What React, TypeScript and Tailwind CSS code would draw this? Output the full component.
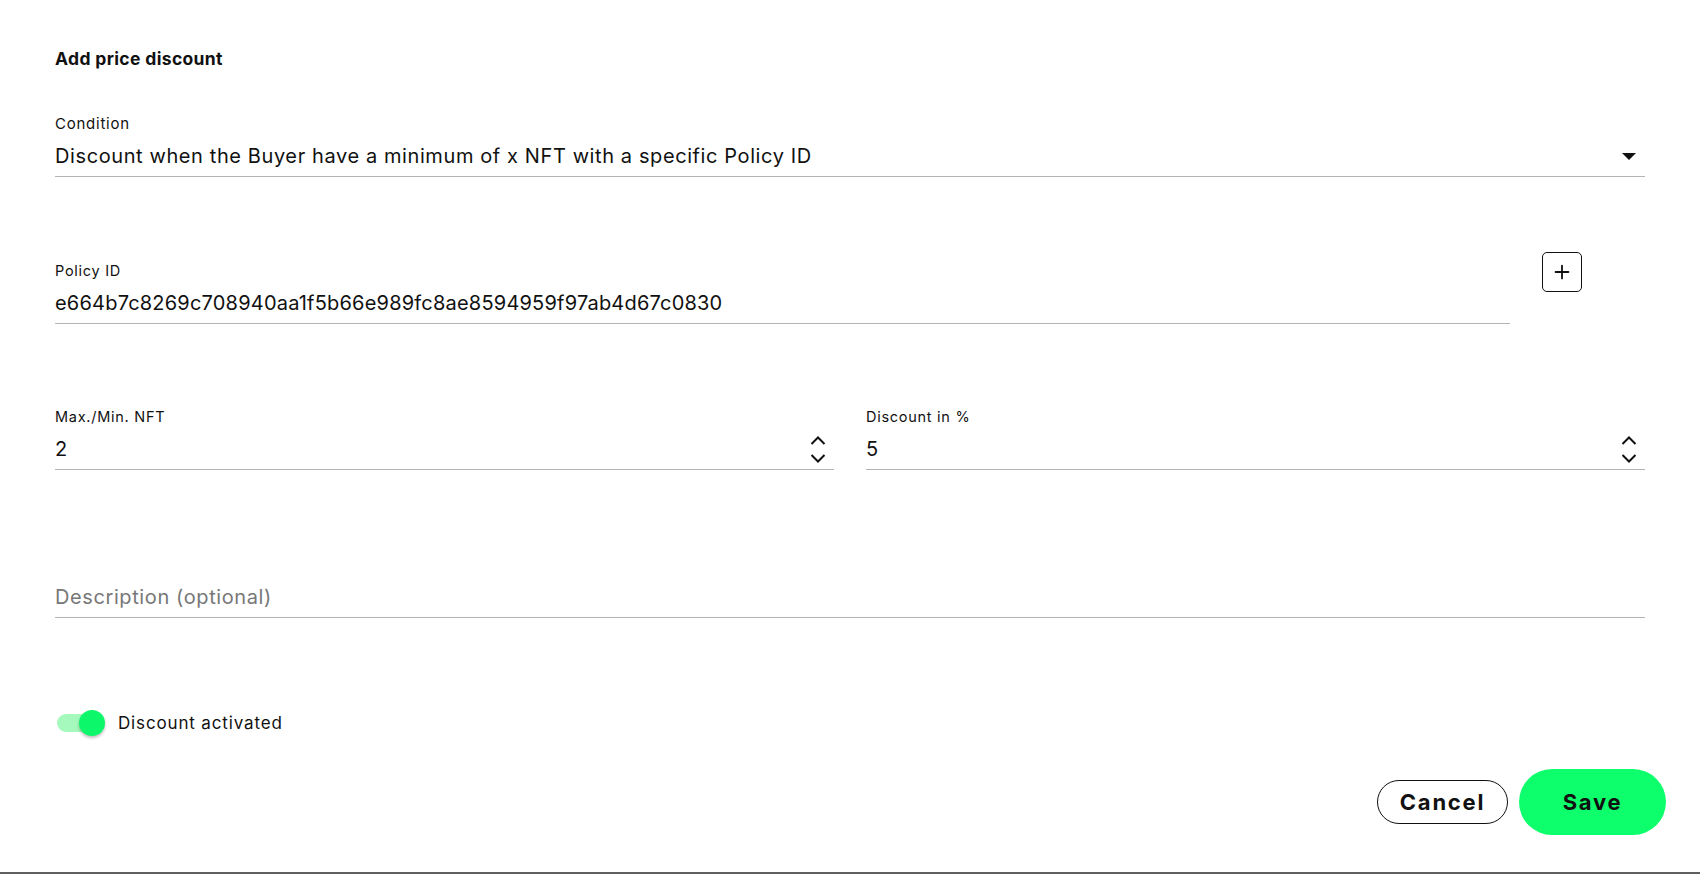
import { Plus } from "lucide-react";

const font = { fontFamily: "Inter, 'Liberation Sans', sans-serif" };

function Chevrons() {
  return (
    <div className="flex flex-col items-center gap-[9px] pr-[8px]">
      <svg width="16" height="9" viewBox="0 0 16 9" fill="none">
        <path d="M1.5 8 L8 1.5 L14.5 8" stroke="#111" strokeWidth="2" />
      </svg>
      <svg width="16" height="9" viewBox="0 0 16 9" fill="none">
        <path d="M1.5 1 L8 7.5 L14.5 1" stroke="#111" strokeWidth="2" />
      </svg>
    </div>
  );
}

function Field({
  label,
  value,
  placeholder,
  right,
  className = "",
}: {
  label?: string;
  value?: string;
  placeholder?: string;
  right?: React.ReactNode;
  className?: string;
}) {
  return (
    <div className={className}>
      <div className="text-[14.5px] leading-[17px] tracking-[0.05em] text-[#111] h-[17px]">{label}</div>
      <div className="mt-[10px] flex items-center justify-between border-b border-[#b4b4b4] pb-[6px]">
        <div
          className={
            "text-[20px] leading-[28px] tracking-[0.03em] " +
            (value ? "text-[#111]" : "text-[#777]")
          }
        >
          {value || placeholder}
        </div>
        {right}
      </div>
    </div>
  );
}

export default function App() {
  return (
    <div
      style={font}
      className="w-full h-[874px] bg-white border-b-2 border-[#5f5f5f] flex flex-col text-[#111]"
    >
      <div className="pl-[55px] pr-[55px] pt-[47px]">
        <h1 className="text-[17.5px] leading-[24px] font-bold tracking-[0.02em]">Add price discount</h1>

        {/* condition */}
        <div className="mt-[44px]">
          <div className="text-[15px] leading-[18px] tracking-[0.05em]">Condition</div>
          <div className="mt-[9px] flex items-center justify-between border-b border-[#b4b4b4] pb-[6px]">
            <div className="text-[20px] leading-[28px] tracking-[0.03em]">
              Discount when the Buyer have a minimum of x NFT with a specific Policy ID
            </div>
            <svg width="14" height="7" viewBox="0 0 14 7" className="mr-[9px] mt-[1px]">
              <path d="M0 0 L14 0 L7 7 Z" fill="#111" />
            </svg>
          </div>
        </div>

        {/* policy id */}
        <div className="mt-[85px] flex items-start">
          <div className="flex-1">
            <div className="text-[14.5px] leading-[17px] tracking-[0.05em] h-[17px]">Policy ID</div>
            <div className="mt-[10px] border-b border-[#b4b4b4] pb-[6px]">
              <div className="text-[20px] leading-[28px] tracking-[0.01em]">
                e664b7c8269c708940aa1f5b66e989fc8ae8594959f97ab4d67c0830
              </div>
            </div>
          </div>
          <div className="ml-[32px] mr-[63px] -mt-[10px] w-[40px] h-[40px] rounded-[5px] border border-[#111] flex items-center justify-center">
            <Plus size={22} strokeWidth={2} color="#111" />
          </div>
        </div>

        {/* numbers */}
        <div className="mt-[84px] flex gap-[32px]">
          <Field className="flex-1" label="Max./Min. NFT" value="2" right={<Chevrons />} />
          <Field className="flex-1" label="Discount in %" value="5" right={<Chevrons />} />
        </div>

        {/* description */}
        <Field className="mt-[86px]" placeholder="Description (optional)" />

        {/* switch */}
        <div className="mt-[92px] flex items-center">
          <div className="relative w-[48px] h-[26px] ml-[2px] flex items-center">
            <div className="w-[43px] h-[18px] rounded-full bg-[#a6f9bd]" />
            <div className="absolute left-[22px] top-0 w-[26px] h-[26px] rounded-full bg-[#0cf76a] shadow-[0_2px_3px_rgba(0,0,0,0.25)]" />
          </div>
          <span className="ml-[13px] text-[17px] leading-[24px] tracking-[0.05em]">Discount activated</span>
        </div>
      </div>

      {/* actions */}
      <div className="mt-[33px] flex items-center justify-end gap-[11px] pr-[34px]">
        <button className="w-[131px] h-[44px] rounded-full border border-[#111] text-[22px] font-bold tracking-[0.08em]">
          Cancel
        </button>
        <button className="w-[147px] h-[66px] rounded-full bg-[#0dff6b] text-[22px] font-bold tracking-[0.08em]">
          Save
        </button>
      </div>
    </div>
  );
}
